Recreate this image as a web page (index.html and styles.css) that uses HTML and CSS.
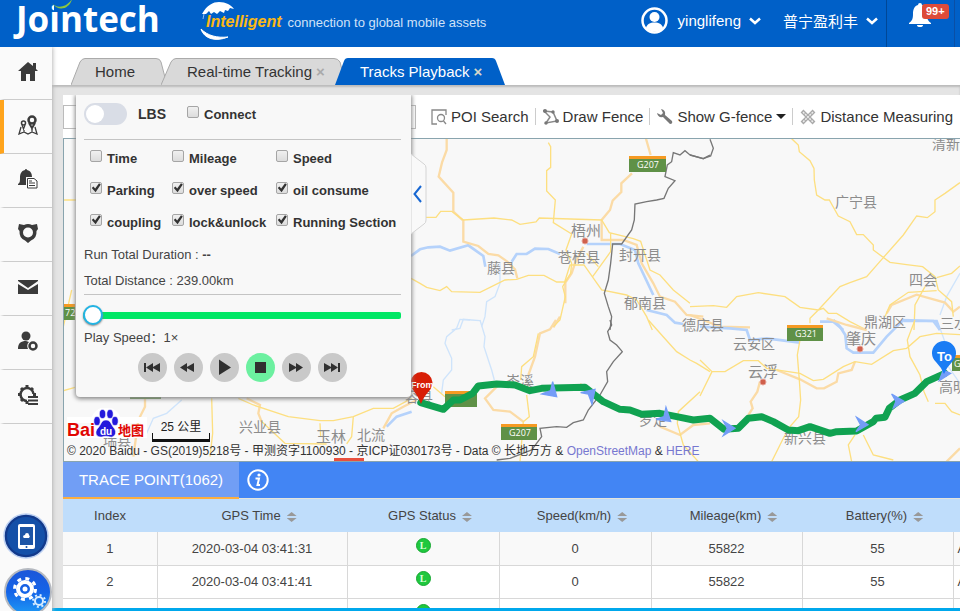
FILE: index.html
```html
<!DOCTYPE html>
<html lang="en">
<head>
<meta charset="utf-8">
<title>Jointech - Tracks Playback</title>
<link rel="stylesheet" href="styles.css">
</head>
<body>
<header class="topbar">
  <div class="logo">Jointech
    <svg class="logo-leaf" width="24" height="12" viewBox="0 0 24 12"><rect x="3" y="0" width="14" height="12" fill="#0060c8"/><path d="M1 3C5 8 14 9 21-1C19 8 8 13 1 3z" fill="#8cc63f"/></svg>
  </div>
  <div class="slogan">
    <svg class="globe" width="40" height="42" viewBox="0 0 40 42"><path d="M2 14C7 5 13 2 19 2C26 2 31 5 34 9L30 8L28 11L25 10L24 13L20 11L17 14L14 12L11 14L9 11L6 14z" fill="#fff"/><path d="M1 29C4 39 16 42 28 37C17 38 8 36 1 29z" fill="#fff" stroke="#fff"/><path d="M4 14L3 19" stroke="#8fbcf0"/></svg>
    <em>Intelligent</em><span>connection to global mobile assets</span>
  </div>
  <div class="account">
    <svg width="27" height="27" viewBox="0 0 27 27"><circle cx="13.500" cy="13.500" r="12" fill="none" stroke="#fff" stroke-width="2.500"/><circle cx="13.500" cy="10" r="5" fill="#fff"/><path d="M5 21C6 17 9 15.500 13.500 15.500S21 17 22 21C17 26 10 26 5 21z" fill="#fff"/></svg>
    <button class="drop">yinglifeng<svg width="12" height="8" viewBox="0 0 12 8"><path d="M1 1.500L6 6L11 1.500" fill="none" stroke="#fff" stroke-width="2.500"/></svg></button>
    <button class="drop company">普宁盈利丰<svg width="12" height="8" viewBox="0 0 12 8"><path d="M1 1.500L6 6L11 1.500" fill="none" stroke="#fff" stroke-width="2.500"/></svg></button>
    <button class="alerts" aria-label="Alerts"><svg width="24" height="24" viewBox="0 0 24 24"><path d="M12 0a2 2 0 0 1 2 2C18 3 19 7 19 11C19 16 20 18 23 20V21H1V20C4 18 5 16 5 11C5 7 6 3 10 2A2 2 0 0 1 12 0zM9 22H15A3 2 0 0 1 9 22z" fill="#fff"/></svg><span class="badge">99+</span></button>
  </div>
</header>
<div class="shell">
<nav class="side">
  <a href="#" aria-label="Home"><svg viewBox="0 0 20 20"><path d="M10 1L0 10H3V20H8V13H12V20H17V10H20L18 8V2H15V5z"/></svg></a>
  <a href="#" class="on" aria-label="Tracking"><svg viewBox="0 0 20 20"><g fill="none" stroke="#3b3b3b"><circle cx="14" cy="5" r="3.500" stroke-width="2.500"/><path d="M11 8L14 13L17 8" stroke-width="2"/><circle cx="5.500" cy="8" r="2" stroke-width="1.500"/><path d="M4 10L5.500 14L7 10M3 12L1 19L6 17L10 19L14 17L19 19L17 12M6 17V15M14 17V14" stroke-width="1.300"/></g></svg></a>
  <a href="#" aria-label="Alarm reports"><svg viewBox="0 0 20 20"><path d="M8 0C9 0 9 1 9 1C13 2 14 5 14 8H8V16H0V15C2 14 2 12 2 9C2 5 3 2 7 1Q7 0 8 0z"/><path d="M9.500 9.500H16L19 12V19H9.500z" fill="#fff" stroke="#3b3b3b"/><path d="M11 14H17M11 16.500H17M11 12H14" stroke="#3b3b3b"/></svg></a>
  <a href="#" aria-label="Security"><svg viewBox="0 0 20 20"><path fill-rule="evenodd" d="M1 1L6 2Q10 0 14 2L19 1L20 6L18.500 8Q19 15 13 17.500L10 20L7 17.500Q1 15 1.500 8L0 6zM10 4.500A5 5 0 1 0 10 14.500A5 5 0 0 0 10 4.500z"/></svg></a>
  <a href="#" aria-label="Messages"><svg viewBox="0 0 20 20"><path d="M0 3H20V4L10 11L0 4zM0 7L10 13L20 7V17H0z"/></svg></a>
  <a href="#" aria-label="Users"><svg viewBox="0 0 20 20"><circle cx="8" cy="5" r="4.500"/><path d="M0 18C0 12 3 10 8 10L11 11Q8 14 10 18z"/><circle cx="15" cy="15" r="3.500" fill="none" stroke="#3b3b3b" stroke-width="2.500"/></svg></a>
  <a href="#" aria-label="Settings"><svg viewBox="0 0 20 20"><g fill="none" stroke="#3b3b3b"><path d="M9 16A6.500 6.500 0 1 1 15.500 9" stroke-width="2.500"/><path d="M9 0V3M9 16V19M0 9.500H3M15 9.500H18M3 3L5 5M15 3L13 5M3 16L5 14" stroke-width="3"/><path d="M10 12H20M10 15.500H20M10 19H20" stroke-width="2"/></g></svg></a>
  <div class="round-tools">
    <button aria-label="Mobile app"><svg width="46" height="46" viewBox="0 0 46 46"><circle cx="23" cy="23" r="22" fill="#123a8c" stroke="#bcd0f2" stroke-width="1.500"/><circle cx="23" cy="23" r="19" fill="#1450a8"/><rect x="15" y="11" width="17" height="25" rx="2" fill="#fff"/><rect x="17" y="14" width="13" height="18" fill="#1d55a6"/><path d="M20 24a2 2 0 0 1 2-2 2 2 0 0 1 4 0 2 2 0 0 1 0 3H21z" fill="#fff"/><circle cx="23.500" cy="34" r="1" fill="#1450a8"/></svg></button>
    <button class="lower" aria-label="Tools"><svg width="50" height="50" viewBox="0 0 50 50"><defs><linearGradient id="orb" x2="0" y2="1"><stop offset="0" stop-color="#1d56d8"/><stop offset=".5" stop-color="#1464e8"/><stop offset="1" stop-color="#1e9bf5"/></linearGradient></defs><circle cx="25" cy="25" r="23" fill="url(#orb)" stroke="#b5b9c0" stroke-width="2"/><circle cx="22" cy="22" r="7" fill="none" stroke="#fff" stroke-width="4"/><circle cx="22" cy="22" r="10.500" fill="none" stroke="#fff" stroke-width="3" stroke-dasharray="4 4.250"/><circle cx="22" cy="22" r="2.500" fill="#fff"/><circle cx="36" cy="34" r="4" fill="none" stroke="#d8ecff" stroke-width="2"/><circle cx="36" cy="34" r="6" fill="none" stroke="#d8ecff" stroke-width="2" stroke-dasharray="2 2.700"/></svg></button>
  </div>
</nav>
<main class="main">
  <div class="tabs">
    <button class="tab"><svg viewBox="0 0 96 27" preserveAspectRatio="none"><path d="M0 27L9 4Q11 .5 14 .5H85Q89 .5 90 4L96 27"/></svg><span>Home</span></button>
    <button class="tab wide"><svg viewBox="0 0 185 27" preserveAspectRatio="none"><path d="M0 27L10 4Q12 .5 15 .5H173Q177 .5 179 4L185 27"/></svg><span>Real-time Tracking</span><i>×</i></button>
    <button class="tab wide current"><svg viewBox="0 0 170 27" preserveAspectRatio="none"><path d="M0 27L9 3Q10 0 13 0H157Q160 0 161 3L170 27"/></svg><span>Tracks Playback</span><i>×</i></button>
  </div>
  <div class="work">
    <div class="toolbar">
      <input class="plate" type="text" aria-label="Device">
      <button><svg width="16" height="16" viewBox="0 0 16 16"><g fill="none" stroke="#888" stroke-width="1.300"><path d="M15 6V1H1V15H6"/><circle cx="10" cy="9" r="3.500"/><path d="M12.500 12L15 15"/></g></svg>POI Search</button>
      <button><svg width="16" height="16" viewBox="0 0 16 16"><path d="M1 2L10 3L14 12L3 14L7 8z" fill="none" stroke="#888" stroke-width="1.500"/><g fill="#777"><circle cx="2" cy="2" r="2"/><circle cx="10" cy="3" r="1.700"/><circle cx="14" cy="12" r="2"/><circle cx="3" cy="14" r="1.700"/></g></svg>Draw Fence</button>
      <button><svg width="16" height="16" viewBox="0 0 16 16"><path d="M4 0Q9 1 8 6L15 12Q16 15 13 15L6 8Q1 9 0 4L4 6L6 4z" fill="#777"/></svg>Show G-fence<svg class="caret" width="10" height="6" viewBox="0 0 10 6"><path d="M0 0H10L5 5z" fill="#222"/></svg></button>
      <button><svg width="16" height="16" viewBox="0 0 16 16"><path d="M2 2L14 14M14 2L2 14" stroke="#aaa" stroke-width="4"/><path d="M3 3L13 13M13 3L3 13" stroke="#eee" stroke-width="1.500" stroke-dasharray="2 1"/></svg>Distance Measuring</button>
    </div>
    <div class="map">
      <svg class="tiles" viewBox="64 139 896 323" preserveAspectRatio="xMinYMin slice">
        <g transform="translate(420 130) scale(.3333)" fill="none">
          <path class="river" d="M-27 378L0 358L25 352L60 350L90 362L145 346L190 378L196 410M275 395L290 372H320L345 356L385 357L420 372M500 342H600L645 360L655 400L700 495M680 540L740 555L765 578L790 582"/>
          <path class="creek" d="M240 400V460L225 500L200 515L195 560L185 590M180 572L155 570L130 568L120 595L95 600"/>
          <path class="highway" d="M80 26V60L66 98L56 140L100 188V245L130 272V335L175 348L205 372L235 376L262 395L285 418L292 445M678 26L692 75M636 130L604 160V186L578 212L570 240L545 270V330H610L650 345L665 400L700 460L720 500L765 515L800 555L850 560M490 350L465 400L455 430L436 458V520M420 560L400 592"/>
          <path class="road" d="M385 38L392 50V112L380 122V183L406 210L400 278L455 312L438 360L455 400L452 430L428 470L436 500L420 570L400 590M0 262H48L62 244H95L130 270L222 264L275 270L300 283L348 276L358 264L545 270L568 308L640 326L662 334L690 420L720 435L760 480L810 520M572 310V365L518 440M-27 445L0 460L20 472L60 482L80 470L95 485L180 487L255 450L290 448L325 436H372L410 456H434L450 405H492L545 480L620 495L650 510L680 560L697 600M500 370L535 410"/>
          <path class="border" d="M870 75L850 86L810 75L795 62L780 75L760 68L755 95L742 105L735 140L765 152L745 175L732 205L710 210L680 215L645 222L643 270L635 300L605 342H578L572 400L565 450L553 490L565 530L575 560L570 600"/>
        </g>
        <g transform="translate(690 130) scale(.3333)" fill="none">
          <path class="river" d="M390 575H430L460 600M640 573H740L750 600"/><path class="creek" d="M810 430L770 500L750 555"/>
          <path class="highway" d="M0 555L90 590L180 592M590 550L605 525L680 494L765 518L790 545L810 530"/>
          <path class="road" d="M305 26L325 45L328 65L360 92L372 115L373 150L380 195L405 210H418L445 258L480 275L500 314H520L550 345V360L600 397L650 404L698 410L735 440L745 480L785 515L790 560M810 158L765 190L735 210V245L712 263L680 258L640 315L580 383L530 440L480 458L450 470L385 540L360 565V580M0 530L70 527L110 532L140 500L205 488L285 500L330 532L385 540L400 535L415 550H440L480 575L530 600M740 443L785 430L810 408M740 482L655 487L600 525L585 560M705 470L675 525L672 600"/>
          <path class="border" d="M0 75L40 86L62 78L70 55L60 28"/>
        </g>
        <g transform="translate(230 290) scale(.3333)" fill="none">
          <path class="river" d="M545 365L500 380L470 410"/><path class="creek" d="M720 90L690 88L680 115L650 140L645 160L665 205V240L640 270L635 310M-145 330L-190 370L-230 385L-250 430L-280 440"/>
          <path class="highway" d="M50 325L90 345L85 370L95 395M460 415L485 370L520 350L560 330M-255 325V350L-275 390L-290 500"/>
          <path class="road" d="M25 325L70 345L175 380L270 392H310L370 380L430 355H490L545 325M270 400L272 440M370 380L365 440L350 462M90 390L165 460L290 462M610 290L645 320M-55 325L-52 430L-60 500M-500 302L-465 292M-475 0L-500 110M-500 -270H-460"/>
        </g>
        <g transform="translate(700 320) scale(.3333)" fill="none">
          <path class="river" d="M0 20L90 25L140 30L150 60L200 55L300 68M400 0L420 20L436 45L440 85L460 98H520L560 50L590 20L610 0L700 3L720 30"/><path class="creek" d="M722 30L740 80M745 140L780 190"/>
          <path class="highway" d="M230 150L300 178L350 205H372L410 185L415 160L455 150L465 125M180 185L172 215L152 245L158 265L145 285M780 385L740 425M380 -5L440 15L500 30"/>
          <path class="road" d="M0 120L36 155H75L130 122H175L200 145L300 160L340 182L370 178L430 140L465 125L515 133L580 92L620 85L660 50L710 40L780 44M36 155L0 228M300 60L292 105L298 180L302 240L296 290L270 320L250 355L215 425M645 0L622 60L630 110L660 165L672 215L685 245M705 250H735L755 275L780 285M465 345L445 375L455 425M490 345L520 405L580 420"/>
        </g>
        <g transform="translate(460 320) scale(.3333)">
          <g fill="none">
          <path class="creek" d="M60 0L75 50L72 80L85 120L95 150L103 180"/>
          <path class="highway" d="M288 0L270 28L240 40L225 110L205 165M120 190L75 235L100 270L150 275L190 305M600 320L660 345L700 315L750 310M360 192L400 215L430 240"/>
          <path class="road" d="M235 40L220 110L185 140L182 180M190 305L208 290L200 225M190 305L180 425M565 0L605 45L650 95L690 120L710 130L750 155M720 215L655 275L652 310L670 375L715 425"/>
          <path class="border" d="M450 0L455 15L443 35L450 60L470 75L487 95L460 125L440 155L443 185L420 225L385 270L370 300L340 308L320 322L290 320L240 325L245 350L215 390L150 415L110 420"/>
          </g>
        </g>
        <g class="place">
          <text x="932" y="149">清新</text><text x="835" y="207">广宁县</text><text x="909" y="285">四会</text><text x="864" y="327">鼎湖区</text><text x="940" y="328">三水</text><text x="682" y="330">德庆县</text><text x="624" y="308">郁南县</text><text x="619" y="260">封开县</text><text x="558" y="262">苍梧县</text><text x="571" y="236" class="city">梧州</text><text x="487" y="273">藤县</text><text x="733" y="349">云安区</text><text x="748" y="377" class="city">云浮</text><text x="846" y="344" class="city">肇庆</text><text x="784" y="443">新兴县</text><text x="939" y="392">高明</text><text x="639" y="425">罗定</text><text x="506" y="386">岑溪</text><text x="239" y="432">兴业县</text><text x="316" y="442" class="city">玉林</text><text x="357" y="440">北流</text><text x="405" y="402">容县</text><text x="103" y="445">瑞县</text>
        </g>
        <g fill="#d0604c" stroke="#e6a49a"><circle cx="585" cy="241" r="3"/><circle cx="763" cy="382" r="3"/><circle cx="860" cy="349" r="3"/></g>
        <g class="shield">
          <path fill="#5f9147" d="M629 156h37v16h-37zM501 424h36v16h-36zM787 325h36v16h-36zM445 391h32v16h-32zM952 355h30v16h-30zM50 305h25v15h-25zM130 390h31v9h-31z"/>
          <path fill="#f59a23" d="M629 156h37v3h-37zM501 424h36v3h-36zM787 325h36v3h-36zM445 391h32v3h-32zM952 355h30v3h-30zM50 304h25v3h-25z"/>
          <path fill="#e8503e" d="M334 458h30v5h-30z"/>
          <text x="637" y="168">G207</text><text x="509" y="436">G207</text><text x="795" y="337">G321</text><text x="954" y="367">G</text><text x="65" y="316">72</text>
        </g>
        <g transform="translate(460 320) scale(.3333)">
          <path class="route" d="M-118 248L-50 268L-20 240L0 240L38 220L55 198L110 192L165 195L210 212L245 205L375 202L430 245L480 268L510 270L545 283L600 280L650 290L700 300L750 295L792 328L835 325L865 295L905 290L940 305L985 330L1015 332L1050 320L1110 340L1130 335L1190 333L1240 305L1248 295L1275 292L1288 265L1320 240L1365 220L1400 185L1455 160"/>
          <path fill="#749df7" d="M246 222L272 212L278 185L290 230ZM362 218L405 208L396 252L385 222ZM588 298L612 290L618 262L632 304ZM790 303L825 325L790 347L802 325ZM1190 292L1224 314L1188 335L1202 315ZM1295 222L1332 244L1300 264L1308 244ZM1450 150L1472 160L1438 182Z" stroke="#749df7" stroke-width="4"/>
        </g>
        <path d="M421 404Q418 396 413 390A11 11 0 1 1 430 390Q424 396 421 404z" fill="#d81e06"/>
        <text x="411" y="388" class="pin-from">From</text>
        <path d="M944 374Q941 367 936 362A12 12 0 1 1 952 362Q947 367 944 374z" fill="#1a7cf4"/>
        <text x="937" y="361" class="pin-to">To</text>
      </svg>
      <div class="map-foot">
        <div class="marks">
          <svg class="baidu" width="84" height="34" viewBox="0 0 84 34"><g fill="none" stroke="#fff" stroke-width="6"><rect x="4" y="12" width="74" height="15"/><circle cx="40" cy="14" r="12"/></g><text x="1" y="28" class="bd">Bai</text><text x="52" y="27" class="bd-cn">地图</text><g fill="#2319dc" stroke="#fff" stroke-width=".6"><ellipse cx="31" cy="13" rx="3.200" ry="4.500"/><ellipse cx="36.500" cy="6" rx="3.200" ry="4.500"/><ellipse cx="44" cy="6" rx="3.200" ry="4.500"/><ellipse cx="49" cy="13" rx="3.200" ry="4.500"/><path d="M40 12C45 12 45 17 48 20C52 25 48 30 44 29C41 28 38 28 36 29C30 30 28 24 32 20C35 17 35 12 40 12z"/></g><text x="34" y="27" class="du">du</text></svg>
          <div class="scale">25 公里</div>
        </div>
        <p class="copy">© 2020 Baidu - GS(2019)5218号 - 甲测资字1100930 - 京ICP证030173号 - Data © 长地万方 &amp; <a href="#">OpenStreetMap</a> &amp; <a href="#">HERE</a></p>
      </div>
    </div>
    <section class="trace">
      <div class="trace-bar"><button class="trace-tab">TRACE POINT(1062)</button><button class="info" aria-label="Information"><svg width="22" height="22" viewBox="0 0 22 22"><circle cx="11" cy="11" r="9.700" fill="none" stroke="#fff" stroke-width="2"/><circle cx="12" cy="6" r="1.600" fill="#fff"/><path d="M8.500 9.500H12L10.500 16H13" fill="none" stroke="#fff" stroke-width="2"/></svg></button></div>
      <table>
        <colgroup><col class="c-index"><col class="c-time"><col class="c-mid"><col class="c-mid"><col class="c-num"><col class="c-num"><col class="c-last"></colgroup>
        <thead><tr><th>Index</th><th>GPS Time<span class="sort"></span></th><th>GPS Status<span class="sort"></span></th><th>Speed(km/h)<span class="sort"></span></th><th>Mileage(km)<span class="sort"></span></th><th>Battery(%)<span class="sort"></span></th><th></th></tr></thead>
        <tbody>
          <tr><td>1</td><td>2020-03-04 03:41:31</td><td><span class="fix">L</span></td><td>0</td><td>55822</td><td>55</td><td>A</td></tr>
          <tr><td>2</td><td>2020-03-04 03:41:41</td><td><span class="fix">L</span></td><td>0</td><td>55822</td><td>55</td><td>A</td></tr>
          <tr><td></td><td></td><td><span class="fix">L</span></td><td></td><td></td><td></td><td></td></tr>
        </tbody>
      </table>
    </section>
    <form class="panel">
      <div class="panel-top">
        <label class="lbs"><input type="checkbox" class="switch">LBS</label>
        <label class="opt"><input type="checkbox" class="tick">Connect</label>
      </div>
      <div class="opts">
        <label class="opt"><input type="checkbox" class="tick">Time</label>
        <label class="opt"><input type="checkbox" class="tick">Mileage</label>
        <label class="opt"><input type="checkbox" class="tick">Speed</label>
        <label class="opt"><input type="checkbox" class="tick" checked>Parking</label>
        <label class="opt"><input type="checkbox" class="tick" checked>over speed</label>
        <label class="opt"><input type="checkbox" class="tick" checked>oil consume</label>
        <label class="opt"><input type="checkbox" class="tick" checked>coupling</label>
        <label class="opt"><input type="checkbox" class="tick" checked>lock&amp;unlock</label>
        <label class="opt"><input type="checkbox" class="tick" checked>Running Section</label>
      </div>
      <div class="totals"><p>Run Total Duration : <b>--</b></p><p>Total Distance : 239.00km</p></div>
      <input class="progress" type="range" min="0" max="100" value="0" aria-label="Playback position">
      <p class="speed">Play Speed：1×</p>
      <div class="player">
        <button type="button" aria-label="First"><svg viewBox="0 0 29 29"><path d="M6 10H8V19H6zM8 14.500L15 10V19zM14 14.500L22 10V19z"/></svg></button>
        <button type="button" aria-label="Slower"><svg viewBox="0 0 29 29"><path d="M6 14.500L13 10V19zM12 14.500L20 10V19z"/></svg></button>
        <button type="button" aria-label="Play"><svg viewBox="0 0 29 29"><path d="M9 6.500V22L21 14.500z"/></svg></button>
        <button type="button" class="stop" aria-label="Stop"><svg viewBox="0 0 29 29"><path d="M9 9H20V20H9z"/></svg></button>
        <button type="button" aria-label="Faster"><svg viewBox="0 0 29 29"><path d="M21 14.500L14 10V19zM15 14.500L7 10V19z"/></svg></button>
        <button type="button" aria-label="Last"><svg viewBox="0 0 29 29"><path d="M20 10H22V19H20zM20 14.500L13 10V19zM14 14.500L6 10V19z"/></svg></button>
      </div>
      <button type="button" class="fold" aria-label="Collapse"><svg width="16" height="84" viewBox="0 0 16 84"><path d="M0 2L13 12Q15 13 15 16V68Q15 71 13 72L0 82z" fill="#f9f9f9" stroke="#d4d4d4"/><path d="M10 34L3.500 42L10 50" fill="none" stroke="#1767d2" stroke-width="2"/></svg></button>
    </form>
  </div>
</main>
</div>
</body>
</html>
```
FILE: styles.css
```css
* { box-sizing: border-box; }
body {
  margin: 0; height: 100vh; overflow: hidden;
  display: flex; flex-direction: column;
  font: 13px "Liberation Sans", "Noto Sans CJK SC", sans-serif; color: #444;
}
button { font: inherit; color: inherit; background: none; border: 0; padding: 0; margin: 0; }
p { margin: 0; }

.topbar { height: 47px; flex: none; background: #0060c8; color: #fff; display: flex; align-items: flex-start; }
.logo { position: relative; margin-left: 16px; width: 184px; font: bold 35px/38px "Open Sans", "Noto Sans", sans-serif; }
.logo-leaf { position: absolute; left: 35px; top: 0; }
.slogan { position: relative; display: flex; align-items: baseline; gap: 6px; padding-left: 6px; line-height: 44px; font-size: 13px; color: #d0e2f8; white-space: nowrap; }
.slogan em { font: italic bold 16px/44px "Liberation Sans", sans-serif; color: #fcb814; }
.globe { position: absolute; left: 0; top: 0; }
.account { margin-left: auto; display: flex; align-items: center; height: 100%; }
.account > svg { margin: 0 10px 6px 0; }
.drop { font-size: 15px; display: flex; align-items: center; gap: 8px; margin: 0 22px 6px 0; }
.company { margin-right: 8px; }
.alerts { position: relative; width: 69px; height: 47px; border-left: 1px solid #004796; border-right: 1px solid #0a4fa5; padding: 0 2px 17px 0; margin-right: 5px; }
.alerts svg { display: inline-block; vertical-align: middle; }
.badge { position: absolute; left: 35px; top: 4px; height: 15px; padding: 0 4px; border-radius: 3px; background: #dd4b39; font: bold 11px/15px "Liberation Sans", sans-serif; }

.shell { flex: 1; display: flex; min-height: 0; }
.side { position: relative; z-index: 3; width: 52px; flex: none; background: #fafafa; box-shadow: 1px 0 4px #bbb; clip-path: inset(0 -6px 0 0); display: flex; flex-direction: column; }
.side a { height: 54px; flex: none; display: flex; align-items: center; justify-content: center; padding-bottom: 4px; border-bottom: 1px solid #ccc; border-left: 4px solid transparent; }
.side a:first-child { height: 53px; }
.side a.on { border-left-color: #ffa41c; }
.side a svg { width: 20px; height: 20px; fill: #3b3b3b; }
.round-tools { position: absolute; left: 3px; bottom: -6px; display: flex; flex-direction: column; gap: 8px; }
.round-tools button { width: 46px; height: 46px; }
.round-tools .lower { width: 50px; height: 50px; }
.round-tools svg { display: block; }

.main { flex: 1; min-width: 0; display: flex; flex-direction: column; }
.tabs { height: 38px; flex: none; display: flex; align-items: flex-end; padding-left: 19px; }
.tab { position: relative; width: 96px; height: 27px; padding: 0 0 0 24px; display: flex; align-items: center; gap: 4px; font-size: 15px; color: #333; }
.tab.wide { width: 185px; margin-left: -6px; padding-left: 26px; }
.tab.current { width: 170px; margin-left: -11px; padding-left: 25px; color: #fff; }
.tab svg { position: absolute; inset: 0; width: 100%; height: 100%; fill: #d9d9d9; stroke: #aaa; }
.tab.current svg { fill: #0060c8; stroke: none; }
.tab span, .tab i { position: relative; white-space: nowrap; }
.tab i { font-style: normal; font-weight: bold; color: #aaa; }
.tab.current i { color: #d8d8c8; }

.work { position: relative; flex: 1; min-height: 0; display: flex; flex-direction: column; padding: 10px 0 0 11px; border-bottom: 3px solid #00a8ec; background: #e4e4e4; box-shadow: inset 0 2px 2px #bbb; }
.toolbar { height: 43px; flex: none; background: #fff; display: flex; align-items: center; overflow: hidden; }
.plate { width: 353px; height: 24px; flex: none; border: 1px solid #bbb; margin-right: 7px; }
.toolbar button { flex: none; display: flex; align-items: center; gap: 4px; font-size: 15px; color: #333; padding: 0 6px 0 7px; border-left: 1px solid #ccc; white-space: nowrap; }
.toolbar .plate + button { border-color: transparent; }

.map { position: relative; flex: 1; min-height: 0; overflow: hidden; background: #f8f8f8; border: 1px solid #89a4ae; border-width: 1px 0 1px 1px; }
.tiles { position: absolute; inset: 0; width: 100%; height: 100%; }
.river { stroke: #b5d2fb; stroke-width: 8; }
.creek { stroke: #cfe4fb; stroke-width: 4; }
.highway { stroke: #fbdba6; stroke-width: 7; }
.road { stroke: #fddf80; stroke-width: 4; }
.border { stroke: #777; stroke-width: 4; }
.route { fill: none; stroke: #10a251; stroke-width: 21; stroke-linejoin: round; stroke-linecap: round; }
.place { font: 14px "Noto Sans CJK SC", sans-serif; fill: #8c8c8c; }
.place .city { font-size: 15px; }
.shield { font: 9px "Open Sans", sans-serif; fill: #fff; }
.pin-from { font: bold 9px "Liberation Sans", sans-serif; fill: #fff; }
.pin-to { font: bold 13px "Liberation Sans", sans-serif; fill: #fff; }
.map-foot { position: absolute; left: 2px; bottom: 1px; }
.marks { display: flex; align-items: flex-end; gap: 2px; }
.bd { font: bold 18px "Liberation Sans", sans-serif; fill: #e10602; }
.bd-cn { font: bold 13px "Noto Sans CJK SC", sans-serif; fill: #e10602; }
.du { font: bold 10px "Liberation Sans", sans-serif; fill: #fff; }
.scale { width: 58px; height: 24px; color: #222; font-size: 12px; line-height: 18px; text-align: center; border: solid #111; border-width: 0 1px 3px; border-image: linear-gradient(transparent 65%, #111 65%) 1 1 3; }
.copy { font-size: 12px; line-height: 18px; color: #333; padding-left: 1px; white-space: nowrap; }
.copy a { color: #7777d0; text-decoration: none; }

.trace { height: 146px; flex: none; overflow: hidden; background: #fff; }
.trace-bar { height: 37px; display: flex; background: #4285f4; border-bottom: 1px solid #e4e4dc; }
.trace-tab { width: 176px; height: 37px; background: #719ef5; border-bottom: 2px solid #fcae40; color: #fff; font-size: 15px; }
.info { padding-left: 8px; }
.info svg { display: block; }
table { width: 1041px; table-layout: fixed; border-collapse: collapse; }
.c-index { width: 94px; }
.c-time { width: 190px; }
.c-mid { width: 152px; }
.c-num { width: 151px; }
th { height: 33px; padding: 0 0 0 14px; background: #bfddfb; font-weight: normal; }
th:first-child { padding: 0; }
td { height: 33px; padding: 0; text-align: center; border: 1px solid #d8d8d8; border-width: 0 1px 1px 0; }
tbody tr:first-child { background: #f9f9f9; }
td:last-child { text-align: left; padding-left: 4px; }
.sort { display: inline-block; width: 10px; height: 10px; margin-left: 6px; vertical-align: -2px; background: #999; clip-path: polygon(50% 0, 100% 40%, 0 40%, 0 60%, 100% 60%, 50% 100%, 0 60%, 0 40%); }
.fix { display: block; width: 15px; height: 15px; margin: 0 auto 6px; border-radius: 50%; background: #1fc83e; border: 1px solid #17a832; color: #d9ffd9; font: bold 10px/13px "Liberation Serif", serif; }

.panel { position: absolute; z-index: 2; left: 24px; top: 10px; width: 335px; padding: 0 10px 15px 8px; background: #f8f8f8; box-shadow: 0 1px 4px 1px #888; clip-path: inset(0 -20px -10px -10px); border-radius: 0 0 4px 4px; }
.panel-top { height: 45px; display: flex; align-items: center; gap: 21px; padding-bottom: 6px; border-bottom: 1px solid #c4c4c4; }
.lbs { display: flex; align-items: center; gap: 11px; font-size: 14px; font-weight: bold; color: #333; }
.switch { appearance: none; margin: 0; width: 43px; height: 22px; border-radius: 11px; background: #d9dde6; padding: 2px; }
.switch::before { content: ""; display: block; width: 18px; height: 18px; border-radius: 50%; background: #fff; }
.opt { display: flex; align-items: center; gap: 5px; font-weight: bold; color: #333; white-space: nowrap; }
.tick { appearance: none; flex: none; width: 12px; height: 12px; margin: 0 0 4px; border: 1px solid #a5a5a5; border-radius: 2px; background: linear-gradient(#f0f0f0, #dcdcdc); }
.tick:checked::before { content: ""; display: block; width: 10px; height: 10px; background: #333; clip-path: polygon(8% 50%, 24% 36%, 42% 56%, 80% 2%, 98% 14%, 46% 92%); }
.opts { display: grid; grid-template-columns: 82px 104px auto; grid-auto-rows: 32px; padding: 2px 0 0 6px; }
.totals { padding-top: 4px; line-height: 26px; border-bottom: 1px solid #c4c4c4; }
.progress { appearance: none; display: block; width: 318px; height: 20px; margin: 10px 0 0 -1px; background: none; }
.progress::-webkit-slider-runnable-track { height: 7px; background: #00e765; border-radius: 2px; }
.progress::-webkit-slider-thumb { appearance: none; width: 20px; height: 20px; margin-top: -7px; border-radius: 50%; background: #fff; border: 2px solid #22b4e4; box-shadow: 0 1px 2px #888; }
.speed { line-height: 26px; }
.player { display: flex; gap: 7px; padding: 2px 0 0 54px; }
.player button { width: 29px; height: 29px; border-radius: 50%; background: #c9c9c9; }
.player svg { display: block; width: 29px; height: 29px; fill: #303030; }
.player .stop { background: #6cf0a0; }
.fold { position: absolute; left: 100%; top: 57px; }
.fold svg { display: block; }
```
